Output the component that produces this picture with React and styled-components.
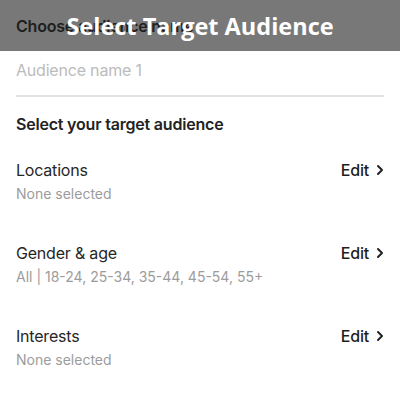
import styled, { createGlobalStyle } from "styled-components";

const GlobalStyle = createGlobalStyle`
html, body {
  margin: 0;
  padding: 0;
  background: #ffffff;
}
body {
  font-family: Inter, "Noto Sans", "Liberation Sans", sans-serif;
}
`;

const Page = styled.div`
position: relative;
width: 400px;
height: 400px;
overflow: hidden;
background: #ffffff;
`;

const Overlay = styled.div`
position: absolute;
top: 0;
left: 0;
right: 0;
height: 51px;
background: rgba(0, 0, 0, 0.53);
display: flex;
align-items: center;
justify-content: center;
`;

const Title = styled.h1`
margin: 0;
color: #ffffff;
font-family: "Open Sans", "Noto Sans", sans-serif;
font-weight: 700;
font-size: 23.5px;
`;

const Content = styled.div`
padding: 16px 16px 0;
display: flex;
flex-direction: column;
letter-spacing: -0.2px;
`;

const FieldLabel = styled.div`
font-size: 16px;
font-weight: 600;
color: #444;
height: 20px;
`;

const NameInput = styled.div`
margin-top: 24px;
padding-bottom: 15px;
border-bottom: 2px solid #e2e2e2;
font-size: 16px;
color: #bbbbbb;
`;

const SectionTitle = styled.div`
margin-top: 17px;
font-size: 16px;
font-weight: 600;
color: #222;
`;

const List = styled.div`
margin-top: 26px;
display: flex;
flex-direction: column;
gap: 41px;
`;

const Row = styled.div`
display: flex;
justify-content: space-between;
align-items: flex-start;
`;

const Info = styled.div`
display: flex;
flex-direction: column;
gap: 5px;
`;

const RowTitle = styled.div`
font-size: 16px;
color: #262626;
`;

const RowValue = styled.div`
font-size: 14px;
color: #9c9c9c;
letter-spacing: 0;
`;

const EditButton = styled.div`
display: flex;
align-items: center;
gap: 7px;
font-size: 16px;
font-weight: 500;
color: #1e1e1e;
`;

const Chevron = () => (
  <svg width="8" height="12" viewBox="0 0 8 12" fill="none">
    <path d="M2 2l4 4-4 4" stroke="#222" strokeWidth="2" strokeLinecap="round" strokeLinejoin="round" />
  </svg>
);

const rows = [
  { title: "Locations", value: "None selected" },
  { title: "Gender & age", value: "All | 18-24, 25-34, 35-44, 45-54, 55+" },
  { title: "Interests", value: "None selected" },
];

export default function App() {
  return (
    <Page>
      <GlobalStyle />
      <Content>
        <FieldLabel>Choose audience name</FieldLabel>
        <NameInput>Audience name 1</NameInput>
        <SectionTitle>Select your target audience</SectionTitle>
        <List>
          {rows.map((row) => (
            <Row key={row.title}>
              <Info>
                <RowTitle>{row.title}</RowTitle>
                <RowValue>{row.value}</RowValue>
              </Info>
              <EditButton>
                Edit <Chevron />
              </EditButton>
            </Row>
          ))}
        </List>
      </Content>
      <Overlay>
        <Title>Select Target Audience</Title>
      </Overlay>
    </Page>
  );
}
